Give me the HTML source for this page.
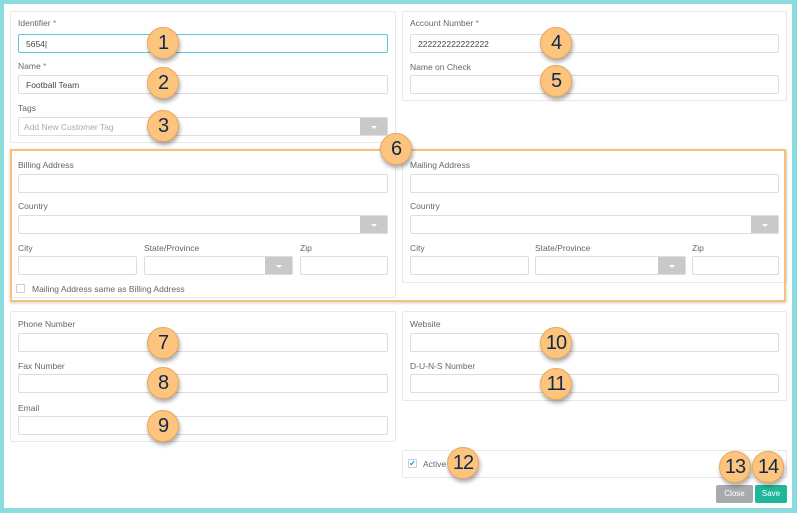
<!DOCTYPE html>
<html><head><style>
*{box-sizing:border-box;margin:0;padding:0}
body{width:797px;height:513px;position:relative;background:#8adcdf;font-family:"Liberation Sans",sans-serif;overflow:hidden}
#page{position:absolute;left:4px;top:4px;width:788px;height:504px;background:#fff}
.a{position:absolute}
.panel{position:absolute;border:1px solid #e8e8e8;border-radius:2px;background:#fff}
.lbl{position:absolute;font-size:8.5px;color:#666}
.lbl i{color:#e06060;font-style:normal}
.in{position:absolute;border:1px solid #ddd;border-radius:2px;background:#fff;height:19px;font-size:8.5px;color:#444;padding:4px 7px}
.sel{position:absolute;border:1px solid #ddd;border-radius:2px;background:#fff;height:19px}
.sel .b{position:absolute;right:0;top:0;bottom:0;width:27px;background:#c9c9c9}
.sel .b:after{content:"";position:absolute;left:11px;top:8px;border:3px solid transparent;border-top:3px solid #fff}
.badge{position:absolute;width:32px;height:32px;border-radius:50%;background:#fcc47d;border:1px solid #e8a860;box-shadow:1px 3px 4px rgba(0,0,0,.35);color:#14284b;font-size:20px;text-align:center;line-height:31px;letter-spacing:-1px}
</style></head><body>
<div id="page"></div>

<div class="panel" style="left:10px;top:11px;width:386px;height:132px"></div>
<div class="lbl" style="left:18px;top:18px">Identifier <i>*</i></div>
<div class="in" style="left:18px;top:34px;width:370px;border-color:#5bc8d8">5654|</div>
<div class="lbl" style="left:18px;top:61px">Name <i>*</i></div>
<div class="in" style="left:18px;top:75px;width:370px">Football Team</div>
<div class="lbl" style="left:18px;top:103px">Tags</div>
<div class="sel" style="left:18px;top:117px;width:370px"><span style="position:absolute;left:5px;top:4px;font-size:8.5px;color:#aaa">Add New Customer Tag</span><div class="b"></div></div>

<div class="panel" style="left:402px;top:11px;width:385px;height:90px"></div>
<div class="lbl" style="left:410px;top:18px">Account Number <i>*</i></div>
<div class="in" style="left:410px;top:34px;width:369px">222222222222222</div>
<div class="lbl" style="left:410px;top:62px">Name on Check</div>
<div class="in" style="left:410px;top:75px;width:369px"></div>

<div class="panel" style="left:10px;top:150px;width:386px;height:148px"></div>
<div class="panel" style="left:402px;top:150px;width:385px;height:133px"></div>
<div class="a" style="left:10px;top:149px;width:776px;height:153px;border:2px solid #f5c27c;box-shadow:0 1px 3px rgba(0,0,0,.2)"></div>

<div class="lbl" style="left:18px;top:160px">Billing Address</div>
<div class="in" style="left:18px;top:174px;width:370px"></div>
<div class="lbl" style="left:18px;top:201px">Country</div>
<div class="sel" style="left:18px;top:215px;width:370px"><div class="b"></div></div>
<div class="lbl" style="left:18px;top:243px">City</div>
<div class="in" style="left:18px;top:256px;width:119px"></div>
<div class="lbl" style="left:144px;top:243px">State/Province</div>
<div class="sel" style="left:144px;top:256px;width:149px"><div class="b"></div></div>
<div class="lbl" style="left:300px;top:243px">Zip</div>
<div class="in" style="left:300px;top:256px;width:88px"></div>
<div class="a" style="left:16px;top:284px;width:9px;height:9px;border:1px solid #ccc;border-radius:1px"></div>
<div class="lbl" style="left:32px;top:284px">Mailing Address same as Billing Address</div>

<div class="lbl" style="left:410px;top:160px">Mailing Address</div>
<div class="in" style="left:410px;top:174px;width:369px"></div>
<div class="lbl" style="left:410px;top:201px">Country</div>
<div class="sel" style="left:410px;top:215px;width:369px"><div class="b"></div></div>
<div class="lbl" style="left:410px;top:243px">City</div>
<div class="in" style="left:410px;top:256px;width:119px"></div>
<div class="lbl" style="left:535px;top:243px">State/Province</div>
<div class="sel" style="left:535px;top:256px;width:151px"><div class="b"></div></div>
<div class="lbl" style="left:692px;top:243px">Zip</div>
<div class="in" style="left:692px;top:256px;width:87px"></div>

<div class="panel" style="left:10px;top:311px;width:386px;height:131px"></div>
<div class="lbl" style="left:18px;top:319px">Phone Number</div>
<div class="in" style="left:18px;top:333px;width:370px"></div>
<div class="lbl" style="left:18px;top:361px">Fax Number</div>
<div class="in" style="left:18px;top:374px;width:370px"></div>
<div class="lbl" style="left:18px;top:403px">Email</div>
<div class="in" style="left:18px;top:416px;width:370px"></div>

<div class="panel" style="left:402px;top:311px;width:385px;height:90px"></div>
<div class="lbl" style="left:410px;top:319px">Website</div>
<div class="in" style="left:410px;top:333px;width:369px"></div>
<div class="lbl" style="left:410px;top:361px">D-U-N-S Number</div>
<div class="in" style="left:410px;top:374px;width:369px"></div>

<div class="panel" style="left:402px;top:450px;width:385px;height:28px"></div>
<div class="a" style="left:408px;top:459px;width:9px;height:9px;border:1px solid #ccc;border-radius:1px;color:#2a9fd8;font-size:8px;line-height:7px;text-align:center">✔</div>
<div class="lbl" style="left:423px;top:459px">Active</div>

<div class="a" style="left:716px;top:485px;width:37px;height:18px;background:#a7abad;border-radius:2px;color:#fff;font-size:8px;text-align:center;line-height:18px">Close</div>
<div class="a" style="left:755px;top:485px;width:32px;height:18px;background:#1fb79a;border-radius:2px;color:#fff;font-size:8px;text-align:center;line-height:18px">Save</div>

<div class="badge" style="left:147px;top:27px">1</div>
<div class="badge" style="left:147px;top:67px">2</div>
<div class="badge" style="left:147px;top:110px">3</div>
<div class="badge" style="left:540px;top:27px">4</div>
<div class="badge" style="left:540px;top:65px">5</div>
<div class="badge" style="left:380px;top:133px">6</div>
<div class="badge" style="left:147px;top:327px">7</div>
<div class="badge" style="left:147px;top:367px">8</div>
<div class="badge" style="left:147px;top:410px">9</div>
<div class="badge" style="left:540px;top:327px">10</div>
<div class="badge" style="left:540px;top:368px">11</div>
<div class="badge" style="left:447px;top:447px">12</div>
<div class="badge" style="left:719px;top:451px">13</div>
<div class="badge" style="left:752px;top:451px">14</div>
</body></html>
